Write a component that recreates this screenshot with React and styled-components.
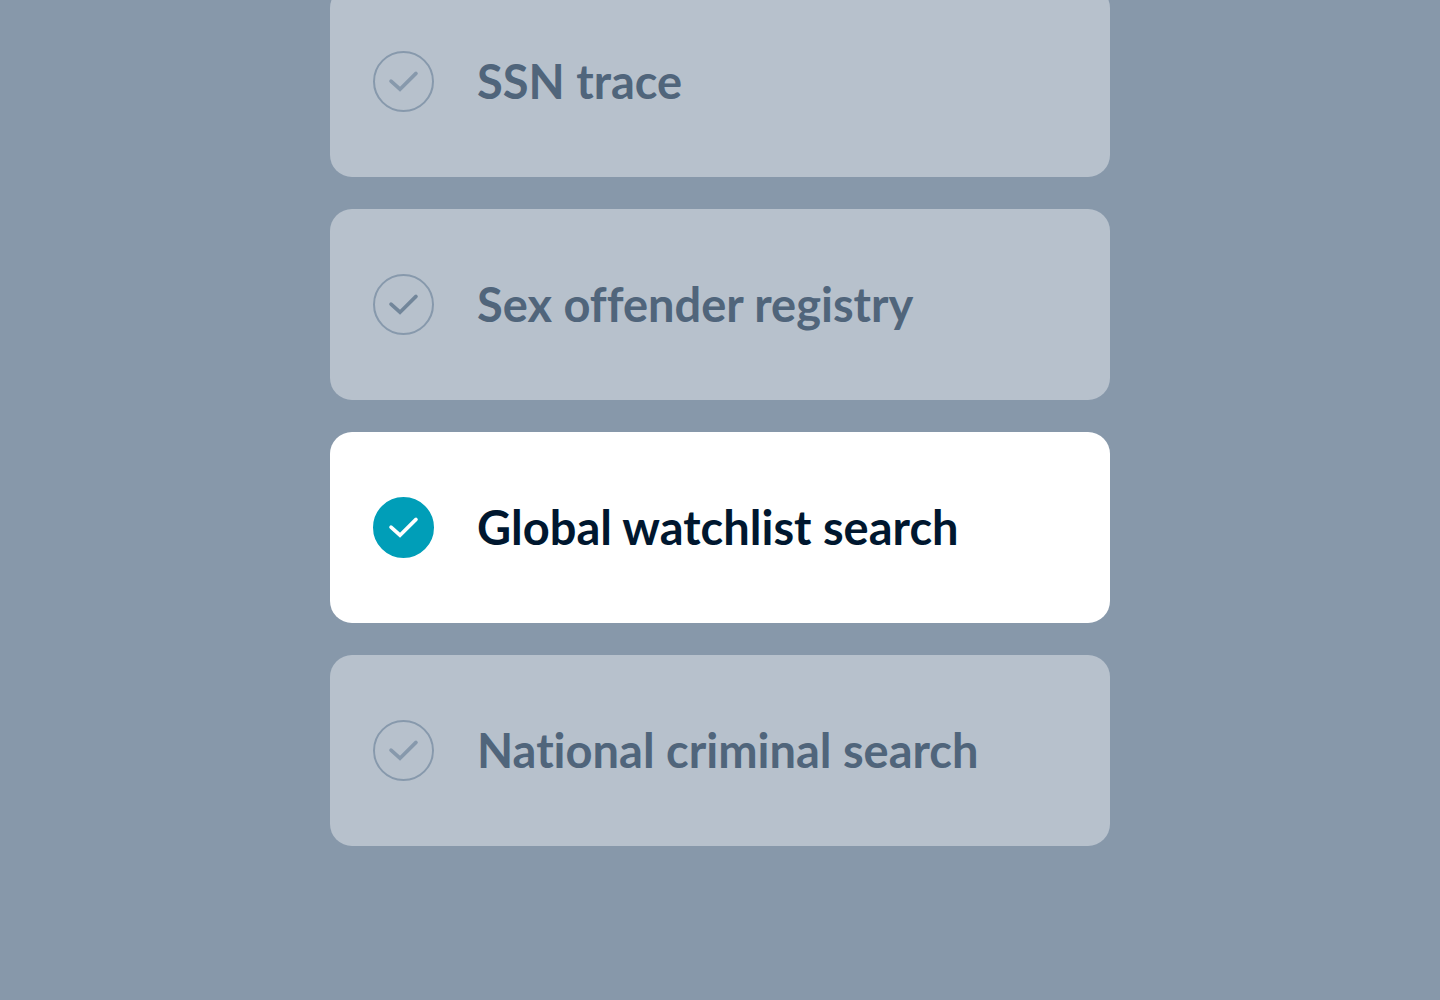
import React from "react";
import styled, { createGlobalStyle } from "styled-components";

const GlobalStyle = createGlobalStyle`
  *, *::before, *::after { box-sizing: border-box; }
  body { margin: 0; background: #8798aa; }
`;

const Page = styled.main`
  height: 100vh;
  overflow: hidden;
  display: flex;
  flex-direction: column;
  justify-content: flex-end;
  align-items: center;
  padding: 0 24px 154px;
  background: #8798aa;
`;

const List = styled.ul`
  list-style: none;
  margin: 0;
  padding: 0;
  width: 100%;
  max-width: 780px;
  display: flex;
  flex-direction: column;
  gap: 32px;
`;

const Card = styled.label`
  display: flex;
  align-items: center;
  gap: 43px;
  padding: 65px 43px;
  border-radius: 22px;
  cursor: pointer;
  background: ${(p) => (p.$active ? "#ffffff" : "#b7c1cc")};
  color: ${(p) => (p.$active ? "#00172f" : "#50657b")};
`;

const Tick = styled.span`
  display: grid;
  flex: none;
  width: 61px;
  height: 61px;

  & > * {
    grid-area: 1 / 1;
  }
`;

const Checkbox = styled.input`
  appearance: none;
  margin: 0;
  width: 61px;
  height: 61px;
  border: 2px solid #8799ac;
  border-radius: 50%;
  cursor: pointer;

  &:checked {
    border-color: #009eb8;
    background: #009eb8;
  }
`;

const Mark = styled.svg`
  width: 61px;
  height: 61px;
  pointer-events: none;
  fill: none;
  stroke: ${(p) => p.$color};
  stroke-width: 3.6;
  stroke-linecap: round;
  stroke-linejoin: miter;
`;

const Name = styled.span`
  font-family: Lato, "Open Sans", sans-serif;
  font-size: 47px;
  font-weight: 700;
  line-height: 61px;
  font-variant-ligatures: no-common-ligatures;
  white-space: nowrap;
`;

const checks = [
  { id: "ssn", name: "SSN trace", mark: "#8799ac" },
  { id: "registry", name: "Sex offender registry", mark: "#72869a" },
  { id: "watchlist", name: "Global watchlist search", mark: "#ffffff", active: true },
  { id: "criminal", name: "National criminal search", mark: "#8799ac" },
];

function CheckItem({ id, name, mark, active = false }) {
  return (
    <li>
      <Card htmlFor={id} $active={active}>
        <Tick>
          <Checkbox id={id} type="checkbox" defaultChecked={active} />
          <Mark viewBox="0 0 61 61" $color={mark} aria-hidden="true">
            <path d="M18 30.2 27 38.2 43 22.4" />
          </Mark>
        </Tick>
        <Name>{name}</Name>
      </Card>
    </li>
  );
}

export default function App() {
  return (
    <>
      <GlobalStyle />
      <Page>
        <List>
          {checks.map((check) => (
            <CheckItem key={check.id} {...check} />
          ))}
        </List>
      </Page>
    </>
  );
}
